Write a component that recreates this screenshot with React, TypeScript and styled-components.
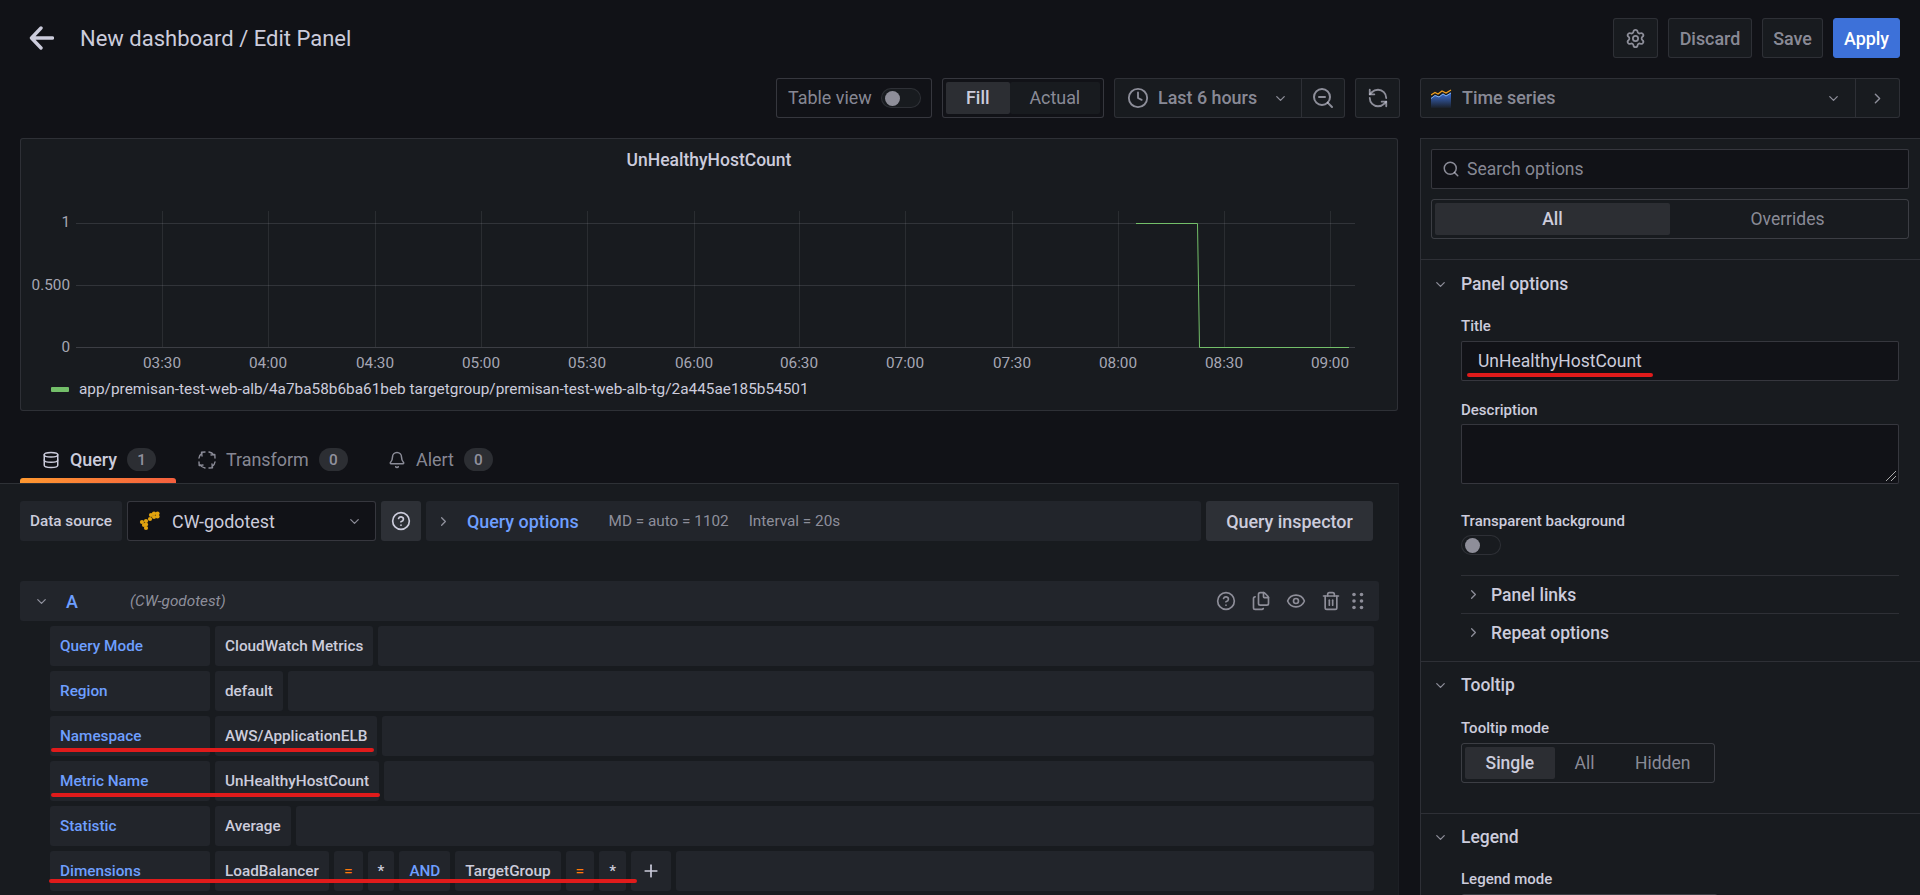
import React from 'react';
import styled, { createGlobalStyle } from 'styled-components';
import {
  Bell, ChevronDown, ChevronRight, CircleHelp, Clock, Database, Eye, Files, Plus,
  RefreshCcw, Search, Settings, Trash2, ZoomOut,
} from 'lucide-react';

const C = {
  canvas: '#111217',
  panel: '#181b1f',
  row: '#22252b',
  active: '#2c2e33',
  text: '#ccccdc',
  muted: 'rgba(204,204,220,0.65)',
  icon: '#8e8e99',
  border: 'rgba(204,204,220,0.12)',
  strong: 'rgba(204,204,220,0.2)',
  blue: '#6e9fff',
  red: '#e01b1b',
};

const Global = createGlobalStyle`
  html, body { margin: 0; padding: 0; background: ${C.canvas}; }
  body { font-family: Roboto, "Liberation Sans", sans-serif; color: ${C.text}; }
  * { box-sizing: border-box; }
`;

const Page = styled.div`
  width: 1920px;
  height: 895px;
  overflow: hidden;
  background: ${C.canvas};
`;

const TopBar = styled.header`
  height: 78px;
  padding: 18px 20px 20px 28px;
  display: flex;
  align-items: center;
`;
const BackIcon = styled.svg`
  width: 26px;
  height: 26px;
  margin-right: 26px;
  flex: none;
`;
const PageTitle = styled.h1`
  margin: 0;
  font-size: 22px;
  font-weight: 400;
  color: ${C.text};
  flex: 1;
`;
const TopActions = styled.div`
  display: flex;
  gap: 10px;
`;
const OutlineButton = styled.button<{ $w?: number }>`
  height: 40px;
  width: ${(p) => p.$w}px;
  padding: 0;
  display: flex;
  align-items: center;
  justify-content: center;
  background: ${C.panel};
  border: 1px solid ${C.border};
  border-radius: 3px;
  color: ${C.muted};
  font: 500 17.9px Roboto, sans-serif;
`;
const PrimaryButton = styled(OutlineButton)`
  background: #3d71d9;
  border-color: #3d71d9;
  color: #fff;
`;

const Body = styled.div`
  display: flex;
  height: 817px;
  overflow: hidden;
`;
const LeftCol = styled.main`
  width: 1420px;
  flex: none;
  display: flex;
  flex-direction: column;
`;
const RightCol = styled.aside`
  flex: 1;
  min-width: 0;
  display: flex;
  flex-direction: column;
`;

const Toolbar = styled.div`
  height: 40px;
  margin: 0 20px 20px 0;
  flex: none;
  display: flex;
  justify-content: flex-end;
  gap: 10px;
`;
const ToolBox = styled.div`
  height: 40px;
  display: flex;
  align-items: center;
  border: 1px solid ${C.strong};
  border-radius: 3px;
  background: ${C.canvas};
  color: ${C.muted};
  font: 400 17.9px Roboto, sans-serif;
`;
const TableToggle = styled(ToolBox)`
  width: 156px;
  padding: 0 10px 0 11px;
  justify-content: space-between;
`;
const LiftedText = styled.span`
  margin-bottom: 2px;
`;
const FitGroup = styled(ToolBox)`
  width: 162px;
  padding: 3px;
`;
const Segment = styled.div<{ $w: number; $on?: boolean }>`
  width: ${(p) => p.$w}px;
  height: 100%;
  padding-bottom: 2px;
  display: flex;
  align-items: center;
  justify-content: center;
  border-radius: 2px;
  background: ${(p) => (p.$on ? C.active : C.panel)};
  color: ${(p) => (p.$on ? C.text : C.muted)};
  font-weight: ${(p) => (p.$on ? 500 : 400)};
`;
const TimeGroup = styled(ToolBox)`
  width: 231px;
  background: ${C.panel};
  border-color: ${C.border};
`;
const TimeMain = styled.div`
  width: 186px;
  height: 100%;
  padding: 0 13px 0 12px;
  display: flex;
  align-items: center;
  gap: 9px;
  font-weight: 500;
`;
const Grow = styled.span`
  flex: 1;
`;
const GrowLifted = styled(Grow)`
  margin-bottom: 2px;
`;
const TimeZoom = styled.div`
  flex: 1;
  height: 100%;
  display: flex;
  align-items: center;
  justify-content: center;
  border-left: 1px solid ${C.border};
`;
const RefreshBox = styled(ToolBox)`
  width: 45px;
  justify-content: center;
  background: ${C.panel};
  border-color: ${C.border};
`;

const Track = styled.div`
  width: 40px;
  height: 20px;
  border: 1px solid ${C.border};
  border-radius: 10px;
  background: ${C.panel};
  display: flex;
  align-items: center;
  padding-left: 3px;
`;
const Knob = styled.div`
  width: 15px;
  height: 15px;
  border-radius: 50%;
  background: ${C.icon};
`;

const ChartPanel = styled.section`
  width: 1378px;
  height: 273px;
  margin-left: 20px;
  flex: none;
  background: ${C.panel};
  border: 1px solid ${C.border};
  border-radius: 3px;
  display: flex;
  flex-direction: column;
`;
const ChartTitle = styled.div`
  height: 42px;
  display: flex;
  align-items: center;
  justify-content: center;
  font-size: 17.5px;
  font-weight: 500;
  flex: none;
`;
const ChartSvg = styled.svg`
  display: block;
  flex: none;
`;
const AxisText = styled.text`
  fill: rgba(204, 204, 220, 0.8);
  font: 400 15.3px Roboto, sans-serif;
`;
const LegendRow = styled.div`
  height: 24px;
  padding-left: 30px;
  display: flex;
  align-items: center;
  gap: 10px;
  font-size: 15.36px;
  color: ${C.text};
`;
const LegendSwatch = styled.span`
  width: 18px;
  height: 5px;
  border-radius: 1px;
  background: #73bf69;
`;

const TabBar = styled.nav`
  height: 72px;
  padding: 30px 0 0 20px;
  display: flex;
  flex: none;
`;
const Tab = styled.div<{ $on?: boolean; $w: number }>`
  position: relative;
  width: ${(p) => p.$w}px;
  height: 42px;
  padding-left: 22px;
  display: flex;
  align-items: center;
  gap: 10px;
  font-size: 17.9px;
  font-weight: ${(p) => (p.$on ? 500 : 400)};
  color: ${(p) => (p.$on ? C.text : C.muted)};
  padding-bottom: 5px;
`;
const TabMark = styled.span`
  position: absolute;
  left: 0;
  right: 0;
  bottom: 0;
  height: 5px;
  border-radius: 3px 3px 0 0;
  background: linear-gradient(90deg, #ff9830, #f55f3e);
`;
const Badge = styled.span`
  min-width: 29px;
  height: 23px;
  border-radius: 12px;
  background: ${C.active};
  display: flex;
  align-items: center;
  justify-content: center;
  font-size: 15.3px;
  font-weight: 500;
  color: ${C.muted};
`;

const QueryPane = styled.section`
  width: 1399px;
  flex: 1;
  background: ${C.panel};
  border-top: 1px solid ${C.border};
  border-right: 1px solid rgba(204, 204, 220, 0.03);
  padding: 17px 25px 0 20px;
`;
const SourceRow = styled.div`
  display: flex;
  gap: 5px;
  height: 40px;
  margin-bottom: 40px;
`;
const Tile = styled.div<{ $w?: number; $grow?: boolean; $light?: boolean; $color?: string; $center?: boolean }>`
  height: 40px;
  flex: ${(p) => (p.$grow ? 1 : 'none')};
  min-width: 0;
  ${(p) => (p.$w ? `width: ${p.$w}px;` : '')}
  padding: ${(p) => (p.$center ? '0' : '0 10px')};
  display: flex;
  align-items: center;
  ${(p) => (p.$center ? 'justify-content: center;' : '')}
  border-radius: 3px;
  background: ${(p) => (p.$light ? '#2d3036' : C.row)};
  color: ${(p) => p.$color || C.text};
  font-size: 15.3px;
  font-weight: 500;
  white-space: nowrap;
`;
const SourceSelect = styled.div`
  width: 249px;
  height: 40px;
  padding: 0 13px 0 11px;
  display: flex;
  align-items: center;
  gap: 11px;
  background: ${C.canvas};
  border: 1px solid ${C.strong};
  border-radius: 3px;
  font-size: 17.9px;
`;
const OptionsBar = styled(Tile)`
  padding: 0 0 0 10px;
  gap: 0;
`;
const OptionsLink = styled.span`
  color: ${C.blue};
  font-size: 17.9px;
  font-weight: 500;
  margin: 0 30px 0 16px;
`;
const OptionsMeta = styled.span`
  color: ${C.muted};
  font-size: 15.3px;
  font-weight: 400;
  margin-right: 20px;
`;
const InspectorButton = styled(Tile)`
  width: 167px;
  justify-content: center;
  font-size: 17.9px;
`;

const QueryHeader = styled.div`
  width: 1359px;
  height: 40px;
  padding: 0 14px 0 14px;
  margin-bottom: 5px;
  display: flex;
  align-items: center;
  background: ${C.row};
  border-radius: 3px;
`;
const RefId = styled.span`
  color: ${C.blue};
  font-size: 17.9px;
  font-weight: 500;
  width: 64px;
  margin-left: 17px;
`;
const SourceName = styled.span`
  flex: 1;
  font-style: italic;
  font-size: 15.3px;
  color: ${C.muted};
`;
const HeaderIcons = styled.div`
  display: flex;
  align-items: center;
  gap: 15px;
  color: ${C.icon};
`;
const GripSvg = styled.svg`
  margin-left: -5px;
`;

const Rows = styled.div`
  display: flex;
  flex-direction: column;
  gap: 5px;
  padding-left: 30px;
  width: 1354px;
`;
const Row = styled.div`
  position: relative;
  display: flex;
  gap: 5px;
  height: 40px;
`;
const Mark = styled.span<{ $l: number; $w: number; $b: number }>`
  position: absolute;
  left: ${(p) => p.$l}px;
  width: ${(p) => p.$w}px;
  bottom: ${(p) => p.$b}px;
  height: 4px;
  border-radius: 2px;
  background: ${C.red};
`;

const VizSelect = styled.div`
  height: 40px;
  width: 480px;
  flex: none;
  margin-bottom: 20px;
  display: flex;
  align-items: center;
  background: ${C.panel};
  border: 1px solid ${C.border};
  border-radius: 3px;
  color: ${C.muted};
  font-size: 17.9px;
  font-weight: 500;
`;
const VizMain = styled.div`
  flex: 1;
  height: 100%;
  padding: 0 14px 0 10px;
  display: flex;
  align-items: center;
  gap: 10px;
`;
const VizNext = styled.div`
  width: 44px;
  height: 100%;
  display: flex;
  align-items: center;
  justify-content: center;
  border-left: 1px solid ${C.border};
`;
const OptionsPane = styled.div`
  flex: 1;
  min-height: 0;
  background: ${C.panel};
  border-left: 1px solid ${C.border};
  border-top: 1px solid ${C.border};
`;
const PaneHead = styled.div`
  padding: 10px 11px 20px 10px;
  display: flex;
  flex-direction: column;
  gap: 10px;
`;
const SearchBox = styled.div`
  height: 40px;
  padding: 0 10px;
  display: flex;
  align-items: center;
  gap: 7px;
  background: ${C.canvas};
  border: 1px solid ${C.strong};
  border-radius: 2px;
  color: ${C.muted};
  font-size: 17.5px;
`;
const Radio = styled.div<{ $w?: number }>`
  height: 40px;
  flex: none;
  ${(p) => (p.$w ? `width: ${p.$w}px;` : '')}
  padding: 3px;
  display: flex;
  border: 1px solid ${C.strong};
  border-radius: 3px;
  font-size: 17.5px;
`;
const RadioItem = styled.div<{ $on?: boolean; $w: number }>`
  width: ${(p) => p.$w}px;
  display: flex;
  align-items: center;
  justify-content: center;
  border-radius: 2px;
  background: ${(p) => (p.$on ? C.active : 'transparent')};
  color: ${(p) => (p.$on ? C.text : C.muted)};
  font-weight: ${(p) => (p.$on ? 500 : 400)};
`;
const Section = styled.div`
  border-top: 1px solid ${C.border};
`;
const SectionHead = styled.div<{ $h: number }>`
  height: ${(p) => p.$h}px;
  padding-left: 12px;
  display: flex;
  align-items: center;
  gap: 13px;
  font-size: 17.5px;
  font-weight: 500;
  color: ${C.text};
`;
const SectionBody = styled.div<{ $pt: number; $pb: number }>`
  padding: ${(p) => p.$pt}px 21px ${(p) => p.$pb}px 40px;
`;
const Field = styled.div<{ $mb?: number }>`
  margin-bottom: ${(p) => p.$mb ?? 20}px;
`;
const FieldLabel = styled.div<{ $mb: number }>`
  height: 18px;
  line-height: 18px;
  margin-bottom: ${(p) => p.$mb}px;
  font-size: 15px;
  font-weight: 500;
  color: ${C.text};
`;
const TextInput = styled.div`
  position: relative;
  height: 40px;
  padding: 0 16px;
  display: flex;
  align-items: center;
  background: ${C.canvas};
  border: 1px solid ${C.strong};
  border-radius: 2px;
  font-size: 17.5px;
  color: ${C.text};
`;
const TextArea = styled.div`
  position: relative;
  height: 60px;
  background: ${C.canvas};
  border: 1px solid ${C.strong};
  border-radius: 2px;
`;
const ResizeGrip = styled.svg`
  position: absolute;
  right: 1px;
  bottom: 1px;
`;
const TitleMark = styled.span`
  position: absolute;
  left: 5px;
  width: 186px;
  bottom: 3px;
  height: 4px;
  border-radius: 2px;
  background: ${C.red};
`;
const Collapse = styled.div`
  height: 38px;
  border-top: 1px solid ${C.border};
  padding-left: 5px;
  display: flex;
  align-items: center;
  gap: 10px;
  font-size: 17.5px;
  font-weight: 500;
  color: ${C.text};
`;
const CollapseList = styled.div`
  margin: 0 21px 10px 40px;
`;

const gridX = [141, 247, 354, 460, 566, 673, 778, 884, 991, 1097, 1203, 1309];
const timeX = ['03:30', '04:00', '04:30', '05:00', '05:30', '06:00', '06:30', '07:00', '07:30', '08:00', '08:30', '09:00'];

function Chart() {
  return (
    <ChartSvg width={1376} height={196} viewBox="0 0 1376 196">
      {gridX.map((x) => (
        <line key={x} x1={x + 0.5} x2={x + 0.5} y1={30} y2={166} stroke="rgba(204,204,220,0.1)" />
      ))}
      {[42, 104].map((y) => (
        <line key={y} x1={55} x2={1334} y1={y + 0.5} y2={y + 0.5} stroke="rgba(204,204,220,0.14)" />
      ))}
      <line x1={55} x2={1334} y1={166.5} y2={166.5} stroke="rgba(204,204,220,0.2)" />
      <AxisText x={49} y={46} textAnchor="end">1</AxisText>
      <AxisText x={49} y={109} textAnchor="end">0.500</AxisText>
      <AxisText x={49} y={171} textAnchor="end">0</AxisText>
      {timeX.map((t, i) => (
        <AxisText key={t} x={gridX[i]} y={187} textAnchor="middle">{t}</AxisText>
      ))}
      <path d="M1115 42.5H1176.5L1178.5 166.5H1328" fill="none" stroke="#73bf69" strokeWidth="1" />
    </ChartSvg>
  );
}

function TimeSeriesIcon() {
  return (
    <svg width="21" height="19" viewBox="0 0 21 19">
      <defs>
        <linearGradient id="area" x1="0" y1="0" x2="0" y2="1">
          <stop offset="0" stopColor="#3d71d9" />
          <stop offset="1" stopColor="#3d71d9" stopOpacity="0.05" />
        </linearGradient>
      </defs>
      <path d="M0 9L4 6L8 7.500L12 4.500L15 6.500L20 3.500V19H0Z" fill="url(#area)" />
      <path d="M0 6L4 3.500L7 5L11 2L15 4L20 1" fill="none" stroke="#f2a01e" strokeWidth="1.200" />
      <path d="M0 9.500L4 6.500L8 8L12 5L15 7L20 4" fill="none" stroke="#7fb2f0" strokeWidth="1" />
    </svg>
  );
}

function AwsIcon() {
  const cells = [[3, 12], [7, 11], [5, 15], [7, 18], [7, 14.5], [11, 9], [12, 5], [15, 3.5], [18.5, 3.5], [15, 7], [18.5, 6.5]];
  return (
    <svg width="22" height="22" viewBox="0 0 22 22">
      {cells.map(([x, y]) => (
        <circle key={`${x}-${y}`} cx={x} cy={y} r="2.1" fill="#e2a40f" />
      ))}
    </svg>
  );
}

function TransformIcon() {
  return (
    <svg width="18" height="18" viewBox="0 0 18 18" fill="none" stroke="currentColor" strokeWidth="1.400" strokeLinecap="round">
      <path d="M1 7C1.300 5 2.300 3.300 4 2.300M7 1L3.500 1.200M3.500 1.200L4 5" />
      <path d="M11 1C13 1.300 14.700 2.300 15.700 4M17 7L16.800 3.500M16.800 3.500L13 4" />
      <path d="M17 11C16.700 13 15.700 14.700 14 15.700M11 17L14.500 16.800M14.500 16.800L14 13" />
      <path d="M7 17C5 16.700 3.300 15.700 2.300 14M1 11L1.200 14.500M1.200 14.500L5 14" />
    </svg>
  );
}

function Grip() {
  const dots = [3.5, 10, 16.5].flatMap((y) => [3, 10.5].map((x) => [x, y]));
  return (
    <GripSvg width="14" height="20" viewBox="0 0 14 20" fill="currentColor">
      {dots.map(([x, y]) => <circle key={`${x}-${y}`} cx={x} cy={y} r="1.800" />)}
    </GripSvg>
  );
}

const rows: { label: string; value: string; mark?: { w: number; b: number; l: number } }[] = [
  { label: 'Query Mode', value: 'CloudWatch Metrics' },
  { label: 'Region', value: 'default' },
  { label: 'Namespace', value: 'AWS/ApplicationELB', mark: { l: 1, w: 323, b: 4 } },
  { label: 'Metric Name', value: 'UnHealthyHostCount', mark: { l: 1, w: 329, b: 4 } },
  { label: 'Statistic', value: 'Average' },
];

export default function App() {
  return (
    <Page>
      <Global />
      <TopBar>
        <BackIcon viewBox="0 0 26 26" fill="none" stroke="#ccccdc" strokeWidth="3.400" strokeLinecap="round" strokeLinejoin="round">
          <path d="M13 3L3.500 13L13 23M4 13H24.500" />
        </BackIcon>
        <PageTitle>New dashboard / Edit Panel</PageTitle>
        <TopActions>
          <OutlineButton $w={45}><Settings size={21} /></OutlineButton>
          <OutlineButton $w={84}>Discard</OutlineButton>
          <OutlineButton $w={61}>Save</OutlineButton>
          <PrimaryButton $w={67}>Apply</PrimaryButton>
        </TopActions>
      </TopBar>
      <Body>
        <LeftCol>
          <Toolbar>
            <TableToggle><LiftedText>Table view</LiftedText><Track><Knob /></Track></TableToggle>
            <FitGroup>
              <Segment $w={64} $on>Fill</Segment>
              <Segment $w={91}>Actual</Segment>
            </FitGroup>
            <TimeGroup>
              <TimeMain>
                <Clock size={22} />
                <GrowLifted>Last 6 hours</GrowLifted>
                <ChevronDown size={15} />
              </TimeMain>
              <TimeZoom><ZoomOut size={24} /></TimeZoom>
            </TimeGroup>
            <RefreshBox><RefreshCcw size={22} /></RefreshBox>
          </Toolbar>
          <ChartPanel>
            <ChartTitle>UnHealthyHostCount</ChartTitle>
            <Chart />
            <LegendRow>
              <LegendSwatch />
              app/premisan-test-web-alb/4a7ba58b6ba61beb targetgroup/premisan-test-web-alb-tg/2a445ae185b54501
            </LegendRow>
          </ChartPanel>
          <TabBar>
            <Tab $on $w={156}><Database size={18} />Query<Badge>1</Badge><TabMark /></Tab>
            <Tab $w={190}><TransformIcon />Transform<Badge>0</Badge></Tab>
            <Tab $w={160}><Bell size={18} />Alert<Badge>0</Badge></Tab>
          </TabBar>
          <QueryPane>
            <SourceRow>
              <Tile $w={102}>Data source</Tile>
              <SourceSelect>
                <AwsIcon />
                <Grow>CW-godotest</Grow>
                <ChevronDown size={15} color={C.muted} />
              </SourceSelect>
              <Tile $w={40} $light $center><CircleHelp size={20} /></Tile>
              <OptionsBar $grow>
                <ChevronRight size={15} color={C.muted} />
                <OptionsLink>Query options</OptionsLink>
                <OptionsMeta>MD = auto = 1102</OptionsMeta>
                <OptionsMeta>Interval = 20s</OptionsMeta>
              </OptionsBar>
              <InspectorButton $light>Query inspector</InspectorButton>
            </SourceRow>
            <QueryHeader>
              <ChevronDown size={15} color={C.muted} />
              <RefId>A</RefId>
              <SourceName>(CW-godotest)</SourceName>
              <HeaderIcons>
                <CircleHelp size={20} />
                <Files size={20} />
                <Eye size={20} />
                <Trash2 size={20} />
                <Grip />
              </HeaderIcons>
            </QueryHeader>
            <Rows>
              {rows.map((r) => (
                <Row key={r.label}>
                  <Tile $w={160} $color={C.blue}>{r.label}</Tile>
                  <Tile>{r.value}</Tile>
                  <Tile $grow />
                  {r.mark && <Mark $l={r.mark.l} $w={r.mark.w} $b={r.mark.b} />}
                </Row>
              ))}
              <Row>
                <Tile $w={160} $color={C.blue}>Dimensions</Tile>
                <Tile>LoadBalancer</Tile>
                <Tile $color="#ff780a">=</Tile>
                <Tile>*</Tile>
                <Tile $color={C.blue}>AND</Tile>
                <Tile>TargetGroup</Tile>
                <Tile $color="#ff780a">=</Tile>
                <Tile>*</Tile>
                <Tile $w={40} $center><Plus size={20} /></Tile>
                <Tile $grow />
                <Mark $l={-1} $w={588} $b={8} />
              </Row>
            </Rows>
          </QueryPane>
        </LeftCol>
        <RightCol>
          <VizSelect>
            <VizMain>
              <TimeSeriesIcon />
              <GrowLifted>Time series</GrowLifted>
              <ChevronDown size={15} />
            </VizMain>
            <VizNext><ChevronRight size={17} /></VizNext>
          </VizSelect>
          <OptionsPane>
            <PaneHead>
              <SearchBox><Search size={18} />Search options</SearchBox>
              <Radio>
                <RadioItem $on $w={235}>All</RadioItem>
                <RadioItem $w={235}>Overrides</RadioItem>
              </Radio>
            </PaneHead>
            <Section>
              <SectionHead $h={48}><ChevronDown size={15} color={C.muted} />Panel options</SectionHead>
              <SectionBody $pt={9} $pb={0}>
                <Field>
                  <FieldLabel $mb={6}>Title</FieldLabel>
                  <TextInput>UnHealthyHostCount<TitleMark /></TextInput>
                </Field>
                <Field $mb={28}>
                  <FieldLabel $mb={5}>Description</FieldLabel>
                  <TextArea>
                    <ResizeGrip width="12" height="12" viewBox="0 0 12 12" stroke="#aaa" strokeWidth="1">
                      <path d="M1 11L11 1M6 11L11 6" />
                    </ResizeGrip>
                  </TextArea>
                </Field>
                <Field $mb={20}>
                  <FieldLabel $mb={5}>Transparent background</FieldLabel>
                  <Track><Knob /></Track>
                </Field>
              </SectionBody>
              <CollapseList>
                <Collapse><ChevronRight size={15} color={C.muted} />Panel links</Collapse>
                <Collapse><ChevronRight size={15} color={C.muted} />Repeat options</Collapse>
              </CollapseList>
            </Section>
            <Section>
              <SectionHead $h={46}><ChevronDown size={15} color={C.muted} />Tooltip</SectionHead>
              <SectionBody $pt={11} $pb={30}>
                <FieldLabel $mb={6}>Tooltip mode</FieldLabel>
                <Radio $w={254}>
                  <RadioItem $on $w={90}>Single</RadioItem>
                  <RadioItem $w={60}>All</RadioItem>
                  <RadioItem $w={97}>Hidden</RadioItem>
                </Radio>
              </SectionBody>
            </Section>
            <Section>
              <SectionHead $h={46}><ChevronDown size={15} color={C.muted} />Legend</SectionHead>
              <SectionBody $pt={10} $pb={0}>
                <FieldLabel $mb={6}>Legend mode</FieldLabel>
                <Radio $w={257} />
              </SectionBody>
            </Section>
          </OptionsPane>
        </RightCol>
      </Body>
    </Page>
  );
}
